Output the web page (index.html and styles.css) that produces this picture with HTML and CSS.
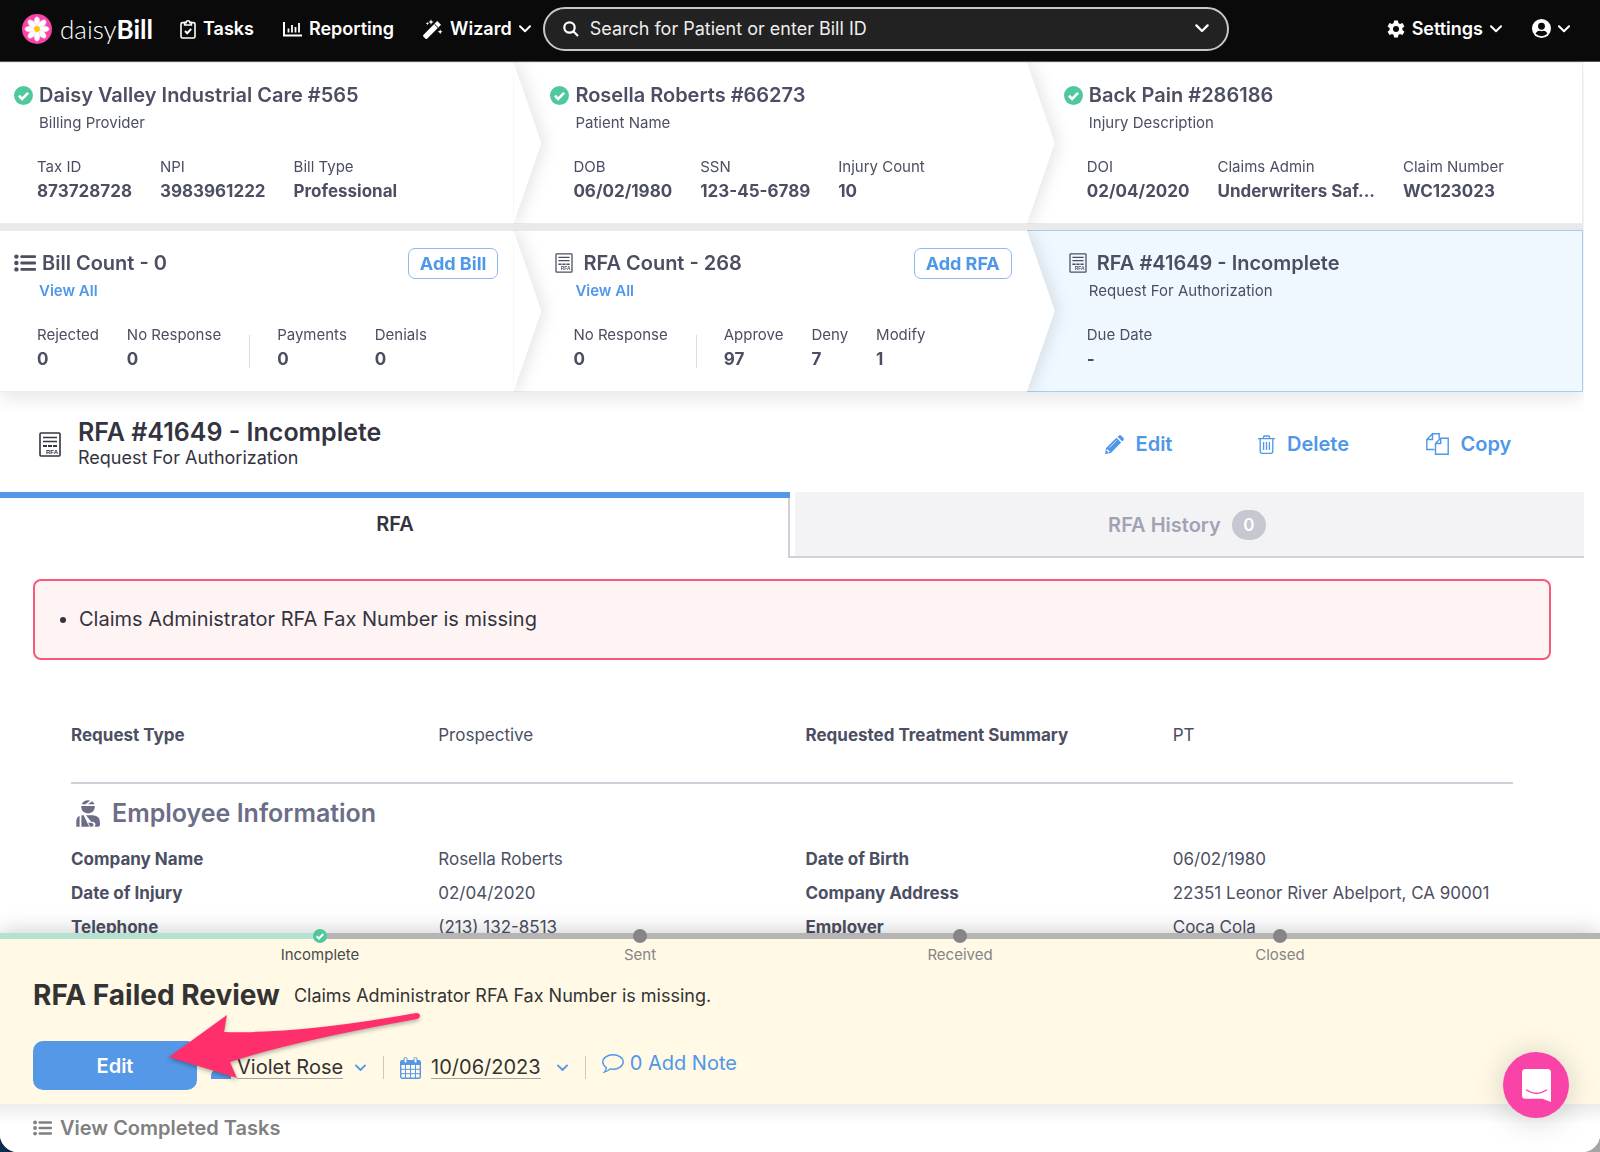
FILE: index.html
```html
<!DOCTYPE html>
<html lang="en">
<head>
    <meta charset="UTF-8">
    <meta name="viewport" content="width=device-width, initial-scale=1.0">
    <title>RFA #41649 - daisyBill</title>
    <link rel="stylesheet" href="styles.css">
</head>
<body>
    <!-- Shared icons -->
    <svg class="sprite" aria-hidden="true">
        <symbol id="icon-check" viewBox="0 0 20 20">
            <circle cx="10" cy="10" r="10" fill="#4fc89c"/>
            <path d="M5.2 10.3l3.4 3.3 6.2-6.4" fill="none" stroke="#fff" stroke-width="2.8"/>
        </symbol>
        <symbol id="icon-chevron" viewBox="0 0 12 8">
            <path d="M1 1.2l5 5 5-5" fill="none" stroke="currentColor" stroke-width="2" stroke-linecap="round" stroke-linejoin="round"/>
        </symbol>
        <symbol id="icon-list" viewBox="0 0 22 18">
            <g fill="currentColor">
                <circle cx="2.4" cy="2.6" r="2.2"/><circle cx="2.4" cy="9" r="2.2"/><circle cx="2.4" cy="15.4" r="2.2"/>
                <rect x="6.4" y="1.2" width="15.6" height="2.8" rx="1"/><rect x="6.4" y="7.6" width="15.6" height="2.8" rx="1"/><rect x="6.4" y="14" width="15.6" height="2.8" rx="1"/>
            </g>
        </symbol>
        <symbol id="icon-rfa" viewBox="0 0 22 25">
            <rect x="1" y="1" width="20" height="23" rx="1" fill="none" stroke="currentColor" stroke-width="1.6"/>
            <path d="M4 5.5h14M4 9.5h14" stroke="currentColor" stroke-width="1.5"/>
            <path d="M4 14h14" stroke="currentColor" stroke-width="1.8" stroke-dasharray="4 1"/>
            <text x="7" y="21.5" font-family="Liberation Sans" font-size="6" font-weight="700" fill="currentColor">RFA</text>
        </symbol>
    </svg>

    <div class="app">
        <header class="topbar">
            <a class="logo" href="#">
                <svg width="30" height="30" viewBox="0 0 30 30">
                    <circle cx="15" cy="15" r="15" fill="#fa43a8"/>
                    <g fill="#fff" stroke="#fbc4e2" stroke-width="0.5">
                        <ellipse cx="15" cy="8" rx="2.9" ry="5.2"/>
                        <ellipse cx="15" cy="8" rx="2.9" ry="5.2" transform="rotate(45 15 15)"/>
                        <ellipse cx="15" cy="8" rx="2.9" ry="5.2" transform="rotate(90 15 15)"/>
                        <ellipse cx="15" cy="8" rx="2.9" ry="5.2" transform="rotate(135 15 15)"/>
                        <ellipse cx="15" cy="8" rx="2.9" ry="5.2" transform="rotate(180 15 15)"/>
                        <ellipse cx="15" cy="8" rx="2.9" ry="5.2" transform="rotate(225 15 15)"/>
                        <ellipse cx="15" cy="8" rx="2.9" ry="5.2" transform="rotate(270 15 15)"/>
                        <ellipse cx="15" cy="8" rx="2.9" ry="5.2" transform="rotate(315 15 15)"/>
                    </g>
                    <circle cx="15" cy="15" r="3" fill="#fdc70c"/>
                </svg>
                <span class="logo-text">daisy<b>Bill</b></span>
            </a>
            <nav class="nav">
                <a class="nav-item" href="#">
                    <svg width="16" height="20" viewBox="0 0 16 20" fill="none" stroke="currentColor" stroke-width="1.6">
                        <rect x="1" y="3.6" width="14" height="15.4" rx="1.5"/>
                        <path d="M4.6 6V3.6h1.6a1.8 1.8 0 0 1 3.6 0h1.6V6z" fill="#0a0a0a"/>
                        <path d="M5 12l2.2 2.2 4-4.4" stroke-width="2"/>
                    </svg>
                    Tasks
                </a>
                <a class="nav-item" href="#">
                    <svg width="19" height="16" viewBox="0 0 19 16" fill="none" stroke="currentColor" stroke-width="2">
                        <path d="M1 1v13.5h18"/>
                        <path d="M5.5 11.5V7.5M9 11.5V4M12.5 11.5V6M16 11.5V2" stroke-width="1.8"/>
                    </svg>
                    Reporting
                </a>
                <button class="nav-item" type="button">
                    <svg width="20" height="20" viewBox="0 0 20 20" fill="currentColor">
                        <path d="M.3 15.900L14.200 2l3.800 3.800L4.100 19.700q-.8.5-1.600 0L.3 17.500q-.5-.8 0-1.600z"/>
                        <path d="M11.400 5l3.600 3.600" stroke="#0a0a0a" stroke-width="1"/>
                        <path d="M8 .2l.8 2 2 .8-2 .8-.8 2-.8-2-2-.8 2-.8zM17.2 10.400l.7 1.700 1.700.7-1.700.7-.7 1.700-.7-1.700-1.700-.7 1.700-.7zM4.400 2.800l.5 1.200 1.200.5-1.200.5-.5 1.200-.5-1.200-1.200-.5 1.200-.5z"/>
                    </svg>
                    Wizard
                    <svg class="chevron" width="12" height="8"><use href="#icon-chevron"/></svg>
                </button>
            </nav>
            <div class="search">
                <svg width="16" height="16" viewBox="0 0 16 16" fill="none" stroke="#fff" stroke-width="2.2">
                    <circle cx="6.5" cy="6.5" r="5.2"/>
                    <path d="M10.3 10.3L15 15"/>
                </svg>
                <input type="text" aria-label="Search" placeholder="Search for Patient or enter Bill ID">
                <svg class="chevron" width="14" height="9"><use href="#icon-chevron"/></svg>
            </div>
            <div class="account">
                <button class="nav-item" type="button">
                    <svg width="18" height="20" viewBox="0 0 18 20">
                        <path fill="currentColor" d="M7.1.5h3.8l.5 2.6 1.6.9 2.5-.9 1.9 3.3-2 1.7v1.9l2 1.7-1.9 3.3-2.5-.9-1.6.9-.5 2.6H7.1l-.5-2.6-1.6-.9-2.5.9-1.9-3.3 2-1.7V8.1l-2-1.7 1.9-3.3 2.5.9 1.6-.9z" transform="translate(0 1)"/>
                        <circle cx="9" cy="10" r="3" fill="#0a0a0a"/>
                    </svg>
                    Settings
                    <svg class="chevron" width="12" height="8"><use href="#icon-chevron"/></svg>
                </button>
                <button class="nav-item" type="button" aria-label="Account">
                    <svg width="19" height="19" viewBox="0 0 20 20">
                        <circle cx="10" cy="10" r="10" fill="#fff"/>
                        <circle cx="10" cy="7.6" r="3.6" fill="#0a0a0a"/>
                        <path d="M3.8 15.6q1.2-3.2 4.2-3.2 2 .8 4 0 3 0 4.2 3.2-2.6 2.6-6.2 2.6t-6.2-2.6z" fill="#0a0a0a"/>
                    </svg>
                    <svg class="chevron" width="12" height="8"><use href="#icon-chevron"/></svg>
                </button>
            </div>
        </header>

        <main class="content">
            <section class="crumbs">
                <div class="crumb-row">
                    <article class="crumb">
                        <h2><svg class="badge" width="19" height="19"><use href="#icon-check"/></svg>Daisy Valley Industrial Care #565</h2>
                        <p class="sub">Billing Provider</p>
                        <dl class="stats">
                            <div><dt>Tax ID</dt><dd>873728728</dd></div>
                            <div><dt>NPI</dt><dd>3983961222</dd></div>
                            <div><dt>Bill Type</dt><dd>Professional</dd></div>
                        </dl>
                    </article>
                    <article class="crumb">
                        <h2><svg class="badge" width="19" height="19"><use href="#icon-check"/></svg>Rosella Roberts #66273</h2>
                        <p class="sub">Patient Name</p>
                        <dl class="stats">
                            <div><dt>DOB</dt><dd>06/02/1980</dd></div>
                            <div><dt>SSN</dt><dd>123-45-6789</dd></div>
                            <div><dt>Injury Count</dt><dd>10</dd></div>
                        </dl>
                    </article>
                    <article class="crumb">
                        <h2><svg class="badge" width="19" height="19"><use href="#icon-check"/></svg>Back Pain #286186</h2>
                        <p class="sub">Injury Description</p>
                        <dl class="stats">
                            <div><dt>DOI</dt><dd>02/04/2020</dd></div>
                            <div><dt>Claims Admin</dt><dd>Underwriters Saf...</dd></div>
                            <div><dt>Claim Number</dt><dd>WC123023</dd></div>
                        </dl>
                    </article>
                </div>
                <div class="crumb-row">
                    <article class="crumb">
                        <h2><svg class="list" width="22" height="18"><use href="#icon-list"/></svg>Bill Count - 0<button class="add" type="button">Add Bill</button></h2>
                        <p class="sub"><a href="#">View All</a></p>
                        <dl class="stats">
                            <div><dt>Rejected</dt><dd>0</dd></div>
                            <div><dt>No Response</dt><dd>0</dd></div>
                            <div class="split"><dt>Payments</dt><dd>0</dd></div>
                            <div><dt>Denials</dt><dd>0</dd></div>
                        </dl>
                    </article>
                    <article class="crumb">
                        <h2><svg class="doc" width="18" height="20"><use href="#icon-rfa"/></svg>RFA Count - 268<button class="add" type="button">Add RFA</button></h2>
                        <p class="sub"><a href="#">View All</a></p>
                        <dl class="stats">
                            <div><dt>No Response</dt><dd>0</dd></div>
                            <div class="split"><dt>Approve</dt><dd>97</dd></div>
                            <div><dt>Deny</dt><dd>7</dd></div>
                            <div><dt>Modify</dt><dd>1</dd></div>
                        </dl>
                    </article>
                    <article class="crumb active">
                        <h2><svg class="doc" width="18" height="20"><use href="#icon-rfa"/></svg>RFA #41649 - Incomplete</h2>
                        <p class="sub">Request For Authorization</p>
                        <dl class="stats">
                            <div><dt>Due Date</dt><dd>-</dd></div>
                        </dl>
                    </article>
                </div>
            </section>

            <section class="heading">
                <svg width="22" height="25"><use href="#icon-rfa"/></svg>
                <div>
                    <h1>RFA #41649 - Incomplete</h1>
                    <p>Request For Authorization</p>
                </div>
                <div class="actions">
                    <a href="#">
                        <svg width="19" height="19" viewBox="0 0 19 19" fill="currentColor">
                            <path d="M11.400 2.800l4.800 4.800L5.900 17.900 0 19l1.100-5.900zM12.500 1.700L14 .5q1-.8 2 0L18.500 3q.8 1 0 2l-1.200 1.500z"/>
                            <path d="M4.400 12.600l7.400-7.400" stroke="#fff" stroke-width=".7"/>
                            <path d="M1.900 14.800l2.300 2.300" stroke="#fff" stroke-width="1.600"/>
                        </svg>
                        Edit
                    </a>
                    <a href="#">
                        <svg width="17" height="19" viewBox="0 0 17 19" fill="none" stroke="currentColor" stroke-width="1.3">
                            <path d="M0 3.700h17M5 3.700L6 1h5l1 2.700M2.200 3.700v12.600q0 2 2 2h8.600q2 0 2-2V3.700M5.600 7v8M8.500 7v8M11.400 7v8"/>
                        </svg>
                        Delete
                    </a>
                    <a href="#">
                        <svg width="23" height="22" viewBox="0 0 23 22" fill="none" stroke="currentColor" stroke-width="1.4">
                            <path d="M8.500 16.500H.8V6.500L6.500.8h6.700v5M.8 6.500h5.700V.8"/>
                            <path d="M9.500 10.500l5.200-5.200h7.500v15.900H9.500zM9.500 10.500h5.200V5.300"/>
                        </svg>
                        Copy
                    </a>
                </div>
            </section>

            <div class="tabs">
                <button class="tab selected" type="button">RFA</button>
                <button class="tab" type="button">RFA History <span class="count">0</span></button>
            </div>

            <ul class="alert">
                <li>Claims Administrator RFA Fax Number is missing</li>
            </ul>

            <section class="details">
                <dl class="fields summary">
                    <dt>Request Type</dt><dd>Prospective</dd>
                    <dt>Requested Treatment Summary</dt><dd>PT</dd>
                </dl>
                <h3>
                    <svg width="24" height="27" viewBox="0 0 24 27" fill="currentColor">
                        <path d="M5.600 4.300Q7.500.2 12 .2l2.200.3-4.600 3.800zM12 4.300L16 1.300q1.800 1.200 2.500 3z"/>
                        <path d="M5.300 6h13.400v1.600q-.6 5.400-6.700 5.800-6.100-.4-6.700-5.800z"/>
                        <path d="M3.600 15.800v11H.3v-5.400q0-4.200 3.300-5.600zM5.400 15.200h2.200l5.700 11.600H5.400z"/>
                        <path d="M10 15.200h7q7 .6 7 7v2.600q0 2-2 2h-3.600q2-1.800.4-4-1.200-1.400-3.600-1.100z"/>
                        <path d="M12.200 22.800h3q2.400.2 2.400 2.200-.4 1.800-2.200 1.800h-1.200z"/>
                    </svg>
                    Employee Information
                </h3>
                <dl class="fields">
                    <dt>Company Name</dt><dd>Rosella Roberts</dd>
                    <dt>Date of Birth</dt><dd>06/02/1980</dd>
                    <dt>Date of Injury</dt><dd>02/04/2020</dd>
                    <dt>Company Address</dt><dd>22351 Leonor River Abelport, CA 90001</dd>
                    <dt>Telephone</dt><dd>(213) 132-8513</dd>
                    <dt>Employer</dt><dd>Coca Cola</dd>
                </dl>
            </section>
        </main>

        <footer class="dock">
            <ol class="tracker">
                <li class="done"><svg width="14" height="14"><use href="#icon-check"/></svg>Incomplete</li>
                <li><i class="dot"></i>Sent</li>
                <li><i class="dot"></i>Received</li>
                <li><i class="dot"></i>Closed</li>
            </ol>
            <div class="task">
                <div class="task-title">
                    <h2>RFA Failed Review</h2>
                    <p>Claims Administrator RFA Fax Number is missing.</p>
                </div>
                <div class="task-controls">
                    <button class="primary" type="button">Edit</button>
                    <button class="picker" type="button">
                        <svg width="20" height="22" viewBox="0 0 20 22" fill="#5598e7">
                            <circle cx="10" cy="6" r="5"/>
                            <path d="M0 22v-3q0-6 6-6h8q6 0 6 6v3z"/>
                        </svg>
                        <span>Violet Rose</span>
                        <svg class="chevron" width="11" height="8"><use href="#icon-chevron"/></svg>
                    </button>
                    <button class="picker" type="button">
                        <svg width="21" height="22" viewBox="0 0 21 22">
                            <rect x=".7" y="3.7" width="19.6" height="17.6" rx="1.5" fill="#fff9e6" stroke="#5598e7" stroke-width="1.4"/>
                            <path d="M.7 8V5q0-1.300 1.300-1.300h17q1.300 0 1.300 1.300v3z" fill="#5598e7"/>
                            <path d="M.7 12.300h19.600M.7 16.700h19.600M5.500 8v13M10.500 8v13M15.500 8v13" stroke="#5598e7"/>
                            <rect x="4" y=".5" width="3" height="5.5" rx="1.4" fill="#fff9e6" stroke="#5598e7"/>
                            <rect x="14" y=".5" width="3" height="5.5" rx="1.4" fill="#fff9e6" stroke="#5598e7"/>
                        </svg>
                        <span>10/06/2023</span>
                        <svg class="chevron" width="11" height="8"><use href="#icon-chevron"/></svg>
                    </button>
                    <a class="note" href="#">
                        <svg width="22" height="19" viewBox="0 0 22 19" fill="none" stroke="currentColor" stroke-width="1.4">
                            <path d="M11 .8c5.600 0 10.200 3.200 10.200 7.200s-4.600 7.200-10.200 7.200q-1.600 0-3-.3-2.400 2.600-5.600 3.200 1.800-2 2-4.600Q.8 11.300.8 8C.8 4 5.400.8 11 .8z"/>
                        </svg>
                        0 Add Note
                    </a>
                </div>
                <!-- Arrow that points at the Edit button -->
                <svg class="pointer" width="256" height="70" viewBox="166 1010 256 70">
                    <path fill="#ff2f6c" d="M169 1057L227 1015L224 1032Q300 1034 416 1013Q420 1013 420 1016Q420 1018 417 1019Q290 1042 230 1062L237 1078Z"/>
                </svg>
            </div>
            <div class="completed">
                <a href="#"><svg width="19" height="16"><use href="#icon-list"/></svg>View Completed Tasks</a>
            </div>
            <button class="chat" type="button" aria-label="Open chat">
                <svg width="29" height="33" viewBox="0 0 29 33">
                    <path fill="#fff" d="M3.500 0h22q3.500 0 3.500 3.500V33l-8.500-3.300h-17Q0 29.700 0 26.200V3.500Q0 0 3.500 0z"/>
                    <path d="M4.500 21q10 6.800 20 0" fill="none" stroke="#fa43a8" stroke-width="1.5" stroke-linecap="round"/>
                </svg>
            </button>
        </footer>
    </div>
</body>
</html>
```

FILE: styles.css
```css
* {
    box-sizing: border-box;
}

body {
    margin: 0;
    background: linear-gradient(to right, #0c2c4e 50%, #a6a6a6 50%);
    font-family: Inter, sans-serif;
    font-size: 17px;
    color: #4c4f63;
}

h1, h2, h3, p, dl, dd, ul, ol {
    margin: 0;
    padding: 0;
}

h1, h2, h3 {
    font-weight: 600;
}

button, input {
    font: inherit;
    color: inherit;
    border: 0;
    background: none;
    padding: 0;
}

a {
    color: #4f97e8;
    text-decoration: none;
}

svg {
    flex: none;
}

.sprite {
    display: none;
}

.app {
    display: flex;
    flex-direction: column;
    height: 100vh;
    overflow: hidden;
    background-color: #fff;
    border-radius: 0 0 18px 18px;
}

/* Top bar */
.topbar {
    flex: none;
    display: flex;
    align-items: center;
    height: 62px;
    padding: 0 30px 4px 22px;
    background-color: #0a0a0a;
    border-bottom: 1px solid #555;
    color: #fff;
}

.logo {
    display: flex;
    align-items: center;
    gap: 8px;
    color: #fff;
}

.logo-text {
    width: 112px;
    font-family: Lato, sans-serif;
    font-size: 26px;
    font-weight: 300;
}

.logo-text b {
    font-weight: 700;
}

.nav {
    display: flex;
    gap: 29px;
    margin-left: 8px;
}

.nav-item {
    display: flex;
    align-items: center;
    gap: 7px;
    color: #fff;
    font-size: 18px;
    font-weight: 600;
}

.search {
    flex: 0 1 686px;
    display: flex;
    align-items: center;
    gap: 11px;
    height: 44px;
    margin-left: 12px;
    padding: 0 18px;
    background-color: #222;
    border: 2px solid #c8c6c6;
    border-radius: 22px;
}

.search input {
    flex: 1;
    font-size: 18px;
}

.search input::placeholder {
    color: #eee;
    opacity: 1;
}

.account {
    display: flex;
    gap: 30px;
    margin-left: auto;
}

/* Breadcrumb cards */
.content {
    flex: 1;
    min-height: 0;
    overflow: hidden;
    margin-right: 16px;
}

.crumbs {
    display: grid;
    gap: 6px;
    margin-right: 1px;
    background-color: #e9e9e9;
    box-shadow: 0 6px 18px rgba(0, 0, 0, 0.1);
}

.crumb-row {
    display: grid;
    grid-template-columns: 12fr 12fr 13fr;
    overflow: hidden;
}

.crumb {
    position: relative;
    min-width: 0;
    height: 162px;
    padding: 18px 15px 0 37px;
    background-color: #fff;
    border: solid #ececee;
    border-width: 1px 0;
    z-index: 3;
    filter: drop-shadow(4px 0 8px rgba(0, 0, 0, 0.1));
}

.crumb + .crumb {
    padding-left: 60px;
    z-index: 2;
}

.crumb + .crumb + .crumb {
    border-right-width: 1px;
    z-index: 1;
}

.crumb:not(:last-child)::after {
    content: "";
    position: absolute;
    left: 100%;
    top: -1px;
    bottom: -1px;
    width: 28px;
    background-color: #fff;
    clip-path: polygon(0 0, 100% 50%, 0 100%);
}

.crumb.active {
    background-color: #f0f8ff;
    border-color: #a9cbf3;
}

.crumb h2 {
    display: flex;
    align-items: center;
    height: 28px;
    margin-left: -23px;
    font-size: 20px;
    white-space: nowrap;
}

.crumb h2 .badge,
.crumb h2 .list {
    margin-right: 6px;
}

.crumb h2 .doc {
    margin: 0 10px 0 5px;
}

.crumb .sub {
    margin-left: 2px;
    font-size: 15px;
    line-height: 27px;
}

.crumb .sub a {
    font-weight: 600;
}

.add {
    height: 31px;
    margin-left: auto;
    padding: 0 11px;
    border: 1px solid #8dbaf1;
    border-radius: 7px;
    background-color: #fff;
    color: #4f97e8;
    font-size: 18px;
    font-weight: 700;
    cursor: pointer;
}

.stats {
    display: flex;
    gap: 28px;
    margin-top: 19px;
    white-space: nowrap;
}

.stats dt {
    font-size: 15px;
    line-height: 24px;
}

.stats dd {
    font-weight: 700;
    line-height: 24px;
}

.stats .split {
    padding-left: 28px;
    background: linear-gradient(#dcdde2, #dcdde2) 0 80% / 1px 33px no-repeat;
}

/* RFA heading */
.heading {
    display: flex;
    align-items: center;
    gap: 17px;
    height: 100px;
    padding: 4px 33px 0 39px;
    color: #33343f;
}

.heading h1 {
    font-size: 25px;
    line-height: 28px;
}

.heading p {
    font-size: 18px;
    line-height: 24px;
}

.actions {
    display: grid;
    grid-template-columns: repeat(3, 165px);
    margin-left: auto;
}

.actions a {
    display: flex;
    align-items: center;
    justify-content: center;
    gap: 12px;
    font-size: 20px;
    font-weight: 600;
}

/* Tabs */
.tabs {
    display: grid;
    grid-template-columns: 199fr 200fr;
    height: 66px;
}

.tab {
    display: flex;
    align-items: center;
    justify-content: center;
    gap: 11px;
    background:
        linear-gradient(#cfd0d9, #cfd0d9) bottom / 100% 2px no-repeat,
        linear-gradient(#fff, #fff) left / 5px 100% no-repeat,
        #f3f3f6;
    color: #a1a3b4;
    font-size: 20px;
    font-weight: 600;
    cursor: pointer;
}

.tab.selected {
    padding-bottom: 8px;
    border-top: 6px solid #5598e7;
    background: linear-gradient(#cfd0d9, #cfd0d9) right / 2px 100% no-repeat;
    color: #33343f;
}

.count {
    width: 34px;
    line-height: 30px;
    border-radius: 15px;
    background-color: #c5c7d1;
    color: #fff;
    font-size: 17px;
}

/* Alert and fields */
.alert {
    margin: 21px 33px 0;
    padding: 0 0 0 44px;
    border: 2px solid #f9597b;
    border-radius: 8px;
    background-color: #fff4f4;
    color: #33343f;
    font-size: 20px;
    line-height: 77px;
}

.details {
    padding: 55px 71px 0;
}

.fields {
    display: grid;
    grid-template-columns: repeat(4, 1fr);
    column-gap: 27px;
    line-height: 34px;
    white-space: nowrap;
}

.fields dt {
    font-weight: 700;
}

.summary {
    padding: 3px 0 30px;
    border-bottom: 2px solid #cfd0d9;
}

.details h3 {
    display: flex;
    align-items: center;
    gap: 12px;
    height: 58px;
    padding-left: 5px;
    color: #6b6e87;
    font-size: 25px;
}

/* Task dock */
.dock {
    flex: none;
    position: relative;
    background-color: #fff9e6;
    box-shadow: 0 0 22px rgba(0, 0, 0, 0.22);
}

.tracker {
    display: flex;
    justify-content: center;
    border-top: 6px solid #b5b5b5;
    border-image: linear-gradient(to right, #b3e3d0 20%, #b5b5b5 20%) 6;
    list-style: none;
}

.tracker li {
    display: flex;
    flex-direction: column;
    align-items: center;
    width: 20%;
    margin-top: -10px;
    color: #858585;
    font-size: 15px;
    line-height: 24px;
}

.tracker .done {
    color: #4a4a4a;
}

.dot {
    width: 14px;
    height: 14px;
    border-radius: 50%;
    background-color: #858585;
}

.task {
    position: relative;
    padding: 8px 33px 14px;
    color: #333;
}

.task-title {
    display: flex;
    align-items: center;
    gap: 14px;
    height: 40px;
}

.task-title h2 {
    font-size: 28px;
    font-weight: 700;
}

.task-title p {
    font-size: 18px;
}

.task-controls {
    display: flex;
    align-items: center;
    height: 49px;
    margin-top: 26px;
    font-size: 20px;
}

.primary {
    width: 164px;
    height: 49px;
    margin-right: 14px;
    border-radius: 10px;
    background-color: #5598e7;
    color: #fff;
    font-weight: 600;
    cursor: pointer;
}

.picker {
    display: flex;
    align-items: center;
    gap: 10px;
    margin-top: 4px;
    padding-right: 17px;
    margin-right: 16px;
    border-right: 1px solid #cdc8bc;
    line-height: 22px;
}

.primary + .picker {
    gap: 6px;
}

.picker span {
    border-bottom: 1px solid #a5a5a5;
}

.picker .chevron {
    margin-left: 6px;
    color: #5598e7;
}

.note {
    display: flex;
    align-items: center;
    gap: 6px;
    padding-bottom: 5px;
}

.pointer {
    position: absolute;
    left: 166px;
    bottom: 24px;
    filter: drop-shadow(0 2px 2px rgba(0, 0, 0, 0.3));
}

.completed {
    height: 48px;
    padding: 0 33px;
    background: linear-gradient(#ececec, #fff 20px);
}

.completed a {
    display: flex;
    align-items: center;
    gap: 8px;
    height: 48px;
    color: #808080;
    font-size: 20px;
    font-weight: 600;
}

.chat {
    position: absolute;
    right: 31px;
    bottom: 34px;
    display: flex;
    align-items: center;
    justify-content: center;
    width: 66px;
    height: 66px;
    border-radius: 50%;
    background-color: #fa43a8;
    box-shadow: 0 2px 32px rgba(0, 0, 0, 0.18);
    cursor: pointer;
}
```
